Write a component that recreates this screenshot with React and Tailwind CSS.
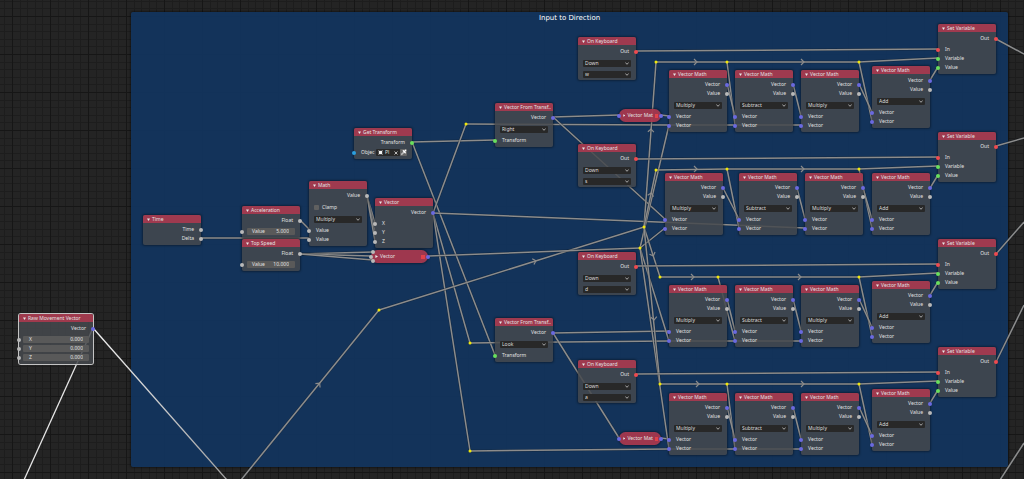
import { useId } from 'react'

const SOCKET = {
  vector: 'bg-[#6a69e0]',
  value: 'bg-[#b9b9b9]',
  exec: 'bg-[#ef4a4f]',
  any: 'bg-[#68e05d]',
  object: 'bg-[#2ba0e0]',
}

const out = (label, type) => ({ kind: 'out', label, type })
const input = (label, type) => ({ kind: 'in', label, type })
const select = (value, options) => ({ kind: 'select', value, options })
const field = (label, value) => ({ kind: 'field', label, value })
const gap = { kind: 'gap' }
const thin = { kind: 'thin' }

const MATH_OPS = ['Add', 'Subtract', 'Multiply', 'Divide']

const vectorMath = (x, y, op) => ({
  title: 'Vector Math', x, y,
  rows: [
    out('Vector', 'vector'),
    out('Value', 'value'),
    gap,
    select(op, MATH_OPS),
    thin,
    input('Vector', 'vector'),
    input('Vector', 'vector'),
  ],
})

const onKeyboard = (y, key) => ({
  title: 'On Keyboard', x: 578, y,
  rows: [
    out('Out', 'exec'),
    gap,
    select('Down', ['Down', 'Up', 'Tap']),
    select(key, ['w', 'a', 's', 'd']),
  ],
})

const setVariable = (y) => ({
  title: 'Set Variable', x: 938, y,
  rows: [out('Out', 'exec'), gap, input('In', 'exec'), input('Variable', 'any'), input('Value', 'any')],
})

const vectorFrom = (y, axis) => ({
  title: 'Vector From Transf..', x: 495, y,
  rows: [out('Vector', 'vector'), gap, select(axis, ['Right', 'Look', 'Up']), thin, input('Transform', 'any')],
})

const NODES = [
  {
    title: 'Raw Movement Vector', x: 19, y: 314, wide: true, selected: true,
    rows: [
      out('Vector', 'vector'),
      gap,
      { ...field('X', '0.000'), tight: true },
      { ...field('Y', '0.000'), tight: true },
      { ...field('Z', '0.000'), tight: true },
    ],
  },
  { title: 'Time', x: 143, y: 215, rows: [out('Time', 'value'), out('Delta', 'value')] },
  { title: 'Acceleration', x: 242, y: 206, rows: [out('Float', 'value'), field('Value', '5.000')] },
  { title: 'Top Speed', x: 242, y: 239, rows: [out('Float', 'value'), field('Value', '10.000')] },
  {
    title: 'Math', x: 309, y: 181,
    rows: [
      out('Value', 'value'),
      gap,
      thin,
      { kind: 'check', label: 'Clamp' },
      gap,
      select('Multiply', MATH_OPS),
      thin,
      input('Value', 'value'),
      input('Value', 'value'),
    ],
  },
  {
    title: 'Vector', x: 375, y: 198,
    rows: [out('Vector', 'vector'), gap, input('X', 'value'), input('Y', 'value'), input('Z', 'value')],
  },
  { title: 'Get Transform', x: 354, y: 128, rows: [out('Transform', 'any'), { kind: 'object', label: 'Objec' }] },
  vectorFrom(103, 'Right'),
  vectorFrom(318, 'Look'),
  onKeyboard(37, 'w'),
  onKeyboard(144, 's'),
  onKeyboard(252, 'd'),
  onKeyboard(360, 'a'),
  vectorMath(669, 70, 'Multiply'),
  vectorMath(735, 70, 'Subtract'),
  vectorMath(801, 70, 'Multiply'),
  vectorMath(872, 66, 'Add'),
  vectorMath(665, 173, 'Multiply'),
  vectorMath(739, 173, 'Subtract'),
  vectorMath(805, 173, 'Multiply'),
  vectorMath(872, 173, 'Add'),
  vectorMath(669, 285, 'Multiply'),
  vectorMath(735, 285, 'Subtract'),
  vectorMath(801, 285, 'Multiply'),
  vectorMath(872, 281, 'Add'),
  vectorMath(669, 393, 'Multiply'),
  vectorMath(735, 393, 'Subtract'),
  vectorMath(801, 393, 'Multiply'),
  vectorMath(872, 389, 'Add'),
  setVariable(24),
  setVariable(132),
  setVariable(239),
  setVariable(347),
]

// x1, y1, x2, y2
const WIRES = [
  [201, 238, 309, 238], [300, 220, 309, 229],
  [367, 196, 375, 223], [367, 196, 375, 232], [367, 196, 375, 241],
  [300, 254, 373, 252], [300, 254, 371, 256], [300, 254, 373, 260],
  [412, 142, 495, 140], [412, 142, 495, 355],
  [433, 213, 466, 124], [433, 213, 470, 343], [433, 213, 470, 451], [433, 213, 805, 228],
  [466, 124, 669, 125], [669, 125, 801, 125],
  [470, 343, 669, 341], [669, 341, 801, 341],
  [470, 451, 669, 449], [669, 449, 801, 449],
  [241, 480, 379, 310], [379, 310, 644, 227], [429, 256, 640, 248],
  [553, 117, 619, 115], [661, 115, 669, 116], [553, 117, 665, 219],
  [553, 333, 669, 331], [553, 333, 619, 438], [661, 438, 669, 439],
  [640, 248, 669, 125], [640, 248, 665, 228], [640, 248, 669, 341], [640, 248, 669, 449],
  [644, 227, 656, 62], [644, 227, 656, 170], [644, 227, 660, 277], [644, 227, 660, 384],
  // keyboard -> set variable
  [636, 51, 938, 49], [636, 159, 938, 157], [636, 266, 938, 264], [636, 374, 938, 372],
  // reroutes, one chain per direction
  [656, 62, 859, 62], [859, 62, 938, 58], [727, 62, 735, 125], [859, 62, 872, 121],
  [656, 170, 727, 169], [727, 169, 859, 169], [859, 169, 938, 166], [727, 169, 739, 228], [859, 169, 872, 228],
  [660, 277, 859, 277], [859, 277, 938, 273], [718, 277, 735, 341], [859, 277, 872, 336],
  [660, 384, 859, 384], [859, 384, 938, 381], [727, 384, 735, 449], [859, 384, 872, 444],
  // math chains
  [727, 84, 735, 116], [793, 84, 801, 116], [859, 84, 872, 112], [930, 80, 938, 67],
  [723, 188, 739, 219], [797, 188, 805, 219], [863, 188, 872, 219], [930, 188, 938, 175],
  [727, 299, 735, 331], [793, 299, 801, 331], [859, 299, 872, 327], [930, 295, 938, 282],
  [727, 407, 735, 439], [793, 407, 801, 439], [859, 407, 872, 435], [930, 403, 938, 390],
  // leaving the frame
  [996, 39, 1024, 54], [996, 146, 1024, 138], [996, 254, 1024, 222], [996, 362, 1024, 305], [1000, 480, 1024, 443],
]

// x, y, rotation
const ARROWS = [
  [696, 62, 0], [803, 62, 0], [696, 169, 0], [803, 169, 0],
  [693, 277, 0], [800, 277, 0], [698, 384, 0], [803, 384, 0],
  [651, 130, -86], [651, 194, -78], [653, 255, 68], [654, 319, 84],
  [319, 384, -51], [535, 261, -17],
]

const REROUTES = [
  [466, 124], [470, 343], [470, 451], [379, 310], [644, 227], [640, 248],
  [656, 62], [727, 62], [859, 62],
  [656, 170], [727, 169], [859, 169],
  [660, 277], [718, 277], [859, 277],
  [660, 384], [859, 384], [727, 384],
]

function Grid() {
  return (
    <svg className="absolute inset-0 h-full w-full" aria-hidden="true">
      <defs>
        <pattern id="grid" x="12" y="16" width="38" height="38" patternUnits="userSpaceOnUse">
          <path d="M8.5 0V38M15.5 0V38M23.5 0V38M30.5 0V38M0 8.5H38M0 15.5H38M0 23.5H38M0 30.5H38" stroke="#1d1d1d" />
          <path d="M.5 0V38M0 .5H38" stroke="#161616" />
        </pattern>
      </defs>
      <rect width="100%" height="100%" fill="url(#grid)" />
    </svg>
  )
}

function Wires() {
  return (
    <svg className="pointer-events-none absolute inset-0 h-full w-full" fill="none" aria-hidden="true">
      <defs>
        <linearGradient id="fade" gradientUnits="userSpaceOnUse" x1="93" y1="328" x2="227" y2="480">
          <stop offset="0" stopColor="#f4f4f4" />
          <stop offset="1" stopColor="#a2a2a2" />
        </linearGradient>
      </defs>
      {WIRES.map(([x1, y1, x2, y2]) => (
        <g key={`${x1},${y1},${x2},${y2}`}>
          <line x1={x1} y1={y1} x2={x2} y2={y2} stroke="#101820" strokeOpacity=".45" strokeWidth="2.4" />
          <line x1={x1} y1={y1} x2={x2} y2={y2} stroke="#8c8c8c" strokeWidth="1.5" />
        </g>
      ))}
      <line x1="93" y1="328" x2="24" y2="480" stroke="#e6e6e6" strokeWidth="1.3" />
      <line x1="93" y1="328" x2="227" y2="480" stroke="url(#fade)" strokeWidth="1.3" />
      {ARROWS.map(([x, y, a]) => (
        <path
          key={`${x},${y}`}
          d="M-2 -3L1 0L-2 3"
          transform={`translate(${x} ${y}) rotate(${a})`}
          stroke="#8c8c8c"
          strokeWidth="1.2"
        />
      ))}
    </svg>
  )
}

function Socket({ type, side }) {
  return (
    <span
      className={`absolute top-1/2 size-[4px] -translate-y-1/2 rounded-full ${SOCKET[type]} ${
        side === 'left' ? '-left-[2px]' : '-right-[2px]'
      }`}
    />
  )
}

function Dropdown({ value, options, name }) {
  return (
    <div className="mx-[5px] grid items-center py-[2px] last:pb-0">
      <select
        aria-label={name}
        defaultValue={value}
        className="col-start-1 row-start-1 block h-[7px] w-full appearance-none rounded-[1px] bg-[#282828] px-[2px] py-0 text-[5px] leading-[7px] text-[#dedede]"
      >
        {options.map((o) => (
          <option key={o}>{o}</option>
        ))}
      </select>
      <svg
        viewBox="0 0 4 3"
        className="pointer-events-none col-start-1 row-start-1 mr-[2px] h-[3px] w-[4px] justify-self-end"
        fill="none"
      >
        <path d="M.4 .5L2 2.3L3.6 .5" stroke="#c4c4c4" strokeWidth=".8" />
      </svg>
    </div>
  )
}

function Field({ label, value, tight }) {
  const id = useId()
  return (
    <div className={tight ? 'py-px' : 'pt-[3px] pb-px'}>
      <div className={`relative flex h-[7px] items-center ${tight ? 'px-[4px]' : 'px-[5px]'}`}>
        <Socket type="value" side="left" />
        <div
          className={`flex h-[7px] w-full items-center rounded-[1px] bg-[#595959] ${tight ? 'px-[6px]' : 'pr-[6px] pl-[5px]'}`}
        >
          <label htmlFor={id}>{label}</label>
          <input
            id={id}
            defaultValue={value}
            className="h-[7px] w-0 min-w-0 flex-1 bg-transparent p-0 text-right text-[5px] leading-[7px]"
          />
        </div>
      </div>
    </div>
  )
}

function ObjectRow({ label }) {
  return (
    <div className="relative mt-px flex h-[9px] items-center pl-[7px]">
      <Socket type="object" side="left" />
      <span className="w-[15px]">{label}</span>
      <button aria-label="Pick object" className="flex h-[7px] w-[16px] items-center gap-[2px] rounded-l-[1px] bg-[#282828] pl-[2px]">
        <svg viewBox="0 0 6 6" className="size-[5px]">
          <rect x="1" y="1" width="4" height="4" fill="#f2f2f2" />
          <path d="M0 1.4V0H1.4M4.6 0H6V1.4M6 4.6V6H4.6M1.4 6H0V4.6" fill="none" stroke="#d0d0d0" strokeWidth=".6" />
        </svg>
        <span>Pl</span>
      </button>
      <button aria-label="Clear object" className="flex h-[7px] w-[8px] items-center justify-center rounded-r-[1px] bg-[#282828]">
        <svg viewBox="0 0 4 4" className="size-[4px]">
          <path d="M.5 .5L3.5 3.5M3.5 .5L.5 3.5" stroke="#e0e0e0" strokeWidth=".8" />
        </svg>
      </button>
      <button aria-label="Eyedropper" className="flex h-[7px] w-[7px] items-center justify-center rounded-[1px] bg-[#666]">
        <svg viewBox="0 0 8 8" className="size-[7px]">
          <path d="M1 7L1.5 5.2L4 2.8L5.2 4L2.8 6.5Z" fill="#bdbdbd" />
          <path d="M3.8 2L6 4.2M4.8 3.2L6.5 1.5" stroke="#fff" strokeWidth="1.6" strokeLinecap="round" />
        </svg>
      </button>
    </div>
  )
}

function Row({ row, name }) {
  switch (row.kind) {
    case 'gap':
      return <div className="h-[2px]" />
    case 'thin':
      return <div className="h-px" />
    case 'out':
      return (
        <div className="relative h-[9px] pr-[7px] text-right">
          {row.label}
          <Socket type={row.type} side="right" />
        </div>
      )
    case 'in':
      return (
        <div className="relative h-[9px] pl-[7px]">
          <Socket type={row.type} side="left" />
          {row.label}
        </div>
      )
    case 'select':
      return <Dropdown {...row} name={name} />
    case 'field':
      return <Field {...row} />
    case 'check':
      return (
        <label className="flex h-[9px] items-center gap-[3px] pl-[5px]">
          <input type="checkbox" className="size-[5px] appearance-none rounded-[1px] bg-[#606060] checked:bg-[#4772b3]" />
          {row.label}
        </label>
      )
    default:
      return <ObjectRow {...row} />
  }
}

function Node({ title, x, y, wide, selected, rows }) {
  return (
    <section
      className={`absolute rounded-[2px] pb-[2px] leading-[9px] ${wide ? 'w-[74px]' : 'w-[58px]'} ${
        selected ? 'ring-1 ring-[#c4c4c4]' : 'shadow-[0_0_2px_1px_rgba(0,0,0,0.35)]'
      } bg-[#45494d]/85`}
      style={{ left: x, top: y }}
    >
      <h2 className="mb-[2px] flex h-[8px] items-center gap-[2px] rounded-t-[2px] bg-[#b0384f]/85 pl-[4px] leading-[8px] whitespace-nowrap">
        <svg viewBox="0 0 4 4" className="size-[3px]">
          <path d="M0 .5H4L2 4Z" fill="#e8e8e8" />
        </svg>
        {title}
      </h2>
      {rows.map((row, i) => (
        <Row key={i} row={row} name={`${title} option`} />
      ))}
    </section>
  )
}

function Collapsed({ title, x, y, wide, children }) {
  return (
    <section
      className={`absolute flex h-[13px] items-center gap-[2px] rounded-full bg-[#a5384e]/95 pl-[4px] whitespace-nowrap shadow-[0_0_2px_1px_rgba(0,0,0,0.35)] ${
        wide ? 'w-[57px]' : 'w-[42px]'
      }`}
      style={{ left: x, top: y }}
    >
      <svg viewBox="0 0 4 4" className="size-[3px]">
        <path d="M.5 0V4L4 2Z" fill="#e8e8e8" />
      </svg>
      <h2>{title}</h2>
      <span className="mr-[3px] ml-auto size-[4px] bg-[#e0414a]" />
      <Socket type="vector" side="right" />
      {children || <Socket type="vector" side="left" />}
    </section>
  )
}

export default function App() {
  return (
    <main className="relative h-screen w-full overflow-hidden bg-[#242424] font-['Noto_Sans','Open_Sans',sans-serif] text-[5px] text-[#e2e2e2]">
      <Grid />
      <div className="absolute top-[12px] right-[16px] bottom-[12px] left-[131px] rounded-[2px] bg-[#12355f]/92 shadow-[0_0_2px_1px_rgba(0,0,0,0.4)]">
        <h1 className="text-center font-['DejaVu_Sans',sans-serif] text-[7px] leading-[12px] text-white">Input to Direction</h1>
      </div>
      <Wires />
      {NODES.map((n) => (
        <Node key={`${n.x}-${n.y}`} {...n} />
      ))}
      <Collapsed title="Vector" x={371} y={250} wide>
        <span className="absolute top-0 left-0 size-[4px] rounded-full bg-[#b9b9b9]" />
        <Socket type="value" side="left" />
        <span className="absolute bottom-0 left-0 size-[4px] rounded-full bg-[#b9b9b9]" />
      </Collapsed>
      <Collapsed title="Vector Mat" x={619} y={109} />
      <Collapsed title="Vector Mat" x={619} y={432} />
      {REROUTES.map(([x, y]) => (
        <span
          key={`${x}-${y}`}
          className="absolute size-[3px] -translate-x-1/2 -translate-y-1/2 rounded-full bg-[#f0e80a]"
          style={{ left: x, top: y }}
        />
      ))}
    </main>
  )
}
